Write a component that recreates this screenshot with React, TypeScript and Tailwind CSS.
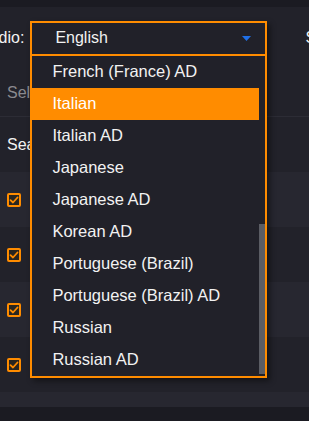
const languages = [
  'French (France) AD',
  'Italian',
  'Italian AD',
  'Japanese',
  'Japanese AD',
  'Korean AD',
  'Portuguese (Brazil)',
  'Portuguese (Brazil) AD',
  'Russian',
  'Russian AD',
]

const tracks = ['t1', 't2', 't3', 't4']

function CheckBox() {
  return (
    <span className="flex items-center justify-center w-[14px] h-[14px] border-2 border-[#ff8c00] rounded-[2px] bg-[#2a2620]">
      <svg width="10" height="10" viewBox="0 0 10 10" fill="none">
        <path d="M1.5 5.2L4 7.5L8.5 2.5" stroke="#ff8c00" strokeWidth="1.8" strokeLinecap="round" strokeLinejoin="round" />
      </svg>
    </span>
  )
}

function LanguageSelect() {
  const selected = 'Italian'
  return (
    <div className="relative w-[237px] h-[34px]">
      <div className="absolute left-0 top-0 w-[237px] z-10 border-2 border-[#ff8c00] bg-[#212129] shadow-[3px_3px_6px_rgba(0,0,0,0.45)]">
        {/* Current value */}
        <div className="flex items-center justify-between h-[33px] pl-[23px] pr-[14px] border-b-2 border-[#ff8c00]">
          <span className="text-[16px] text-[#f2f2f2]">English</span>
          <svg width="9" height="5" viewBox="0 0 9 5">
            <path d="M0 0H9L4.5 5Z" fill="#1f6fe6" />
          </svg>
        </div>
        {/* Options, scrolled to the end */}
        <div className="flex h-[320px]">
          <ul className="flex-1 flex flex-col">
            {languages.map((lang) => (
              <li
                key={lang}
                className={`flex items-center h-[32px] pl-[20px] text-[16.5px] ${
                  lang === selected ? 'bg-[#ff8c00] text-white' : 'text-[#f2f2f2]'
                }`}
              >
                {lang}
              </li>
            ))}
          </ul>
          <div className="w-[6px] flex flex-col justify-end pb-[2px]">
            <div className="h-[150px] bg-[#5b5d64]" />
          </div>
        </div>
      </div>
    </div>
  )
}

export default function App() {
  return (
    <div className="w-[309px] h-[421px] overflow-hidden bg-[#22222a] flex flex-col font-['Liberation_Sans',Arial,sans-serif] text-[16px] text-[#f2f2f2]">
      <div className="h-[7px] shrink-0 bg-[#1b1b22]" />

      {/* Audio / subtitle pickers */}
      <div className="h-[63px] shrink-0 flex items-start pt-[13px]">
        <div className="flex items-center h-[35px] ml-[-21px] whitespace-nowrap">
          <span>Audio:</span>
          <div className="ml-[6px]">
            <LanguageSelect />
          </div>
          <span className="ml-[38px]">Subtitle:</span>
        </div>
      </div>

      <div className="h-[47px] shrink-0 flex items-center pl-[7px] border-b border-[#2c2c35] text-[#8a8a8f] whitespace-nowrap">
        Select
      </div>

      <div className="h-[55px] shrink-0 flex items-center pl-[7px] whitespace-nowrap">
        Search
      </div>

      {tracks.map((t, i) => (
        <div
          key={t}
          className={`h-[55px] shrink-0 flex items-center pl-[7px] ${
            i % 2 === 0 ? 'bg-[#272730]' : 'bg-[#22222a]'
          }`}
        >
          <CheckBox />
        </div>
      ))}

      <div className="h-[15px] shrink-0 bg-[#272730]" />
      <div className="flex-1 bg-[#1b1b22]" />
    </div>
  )
}
